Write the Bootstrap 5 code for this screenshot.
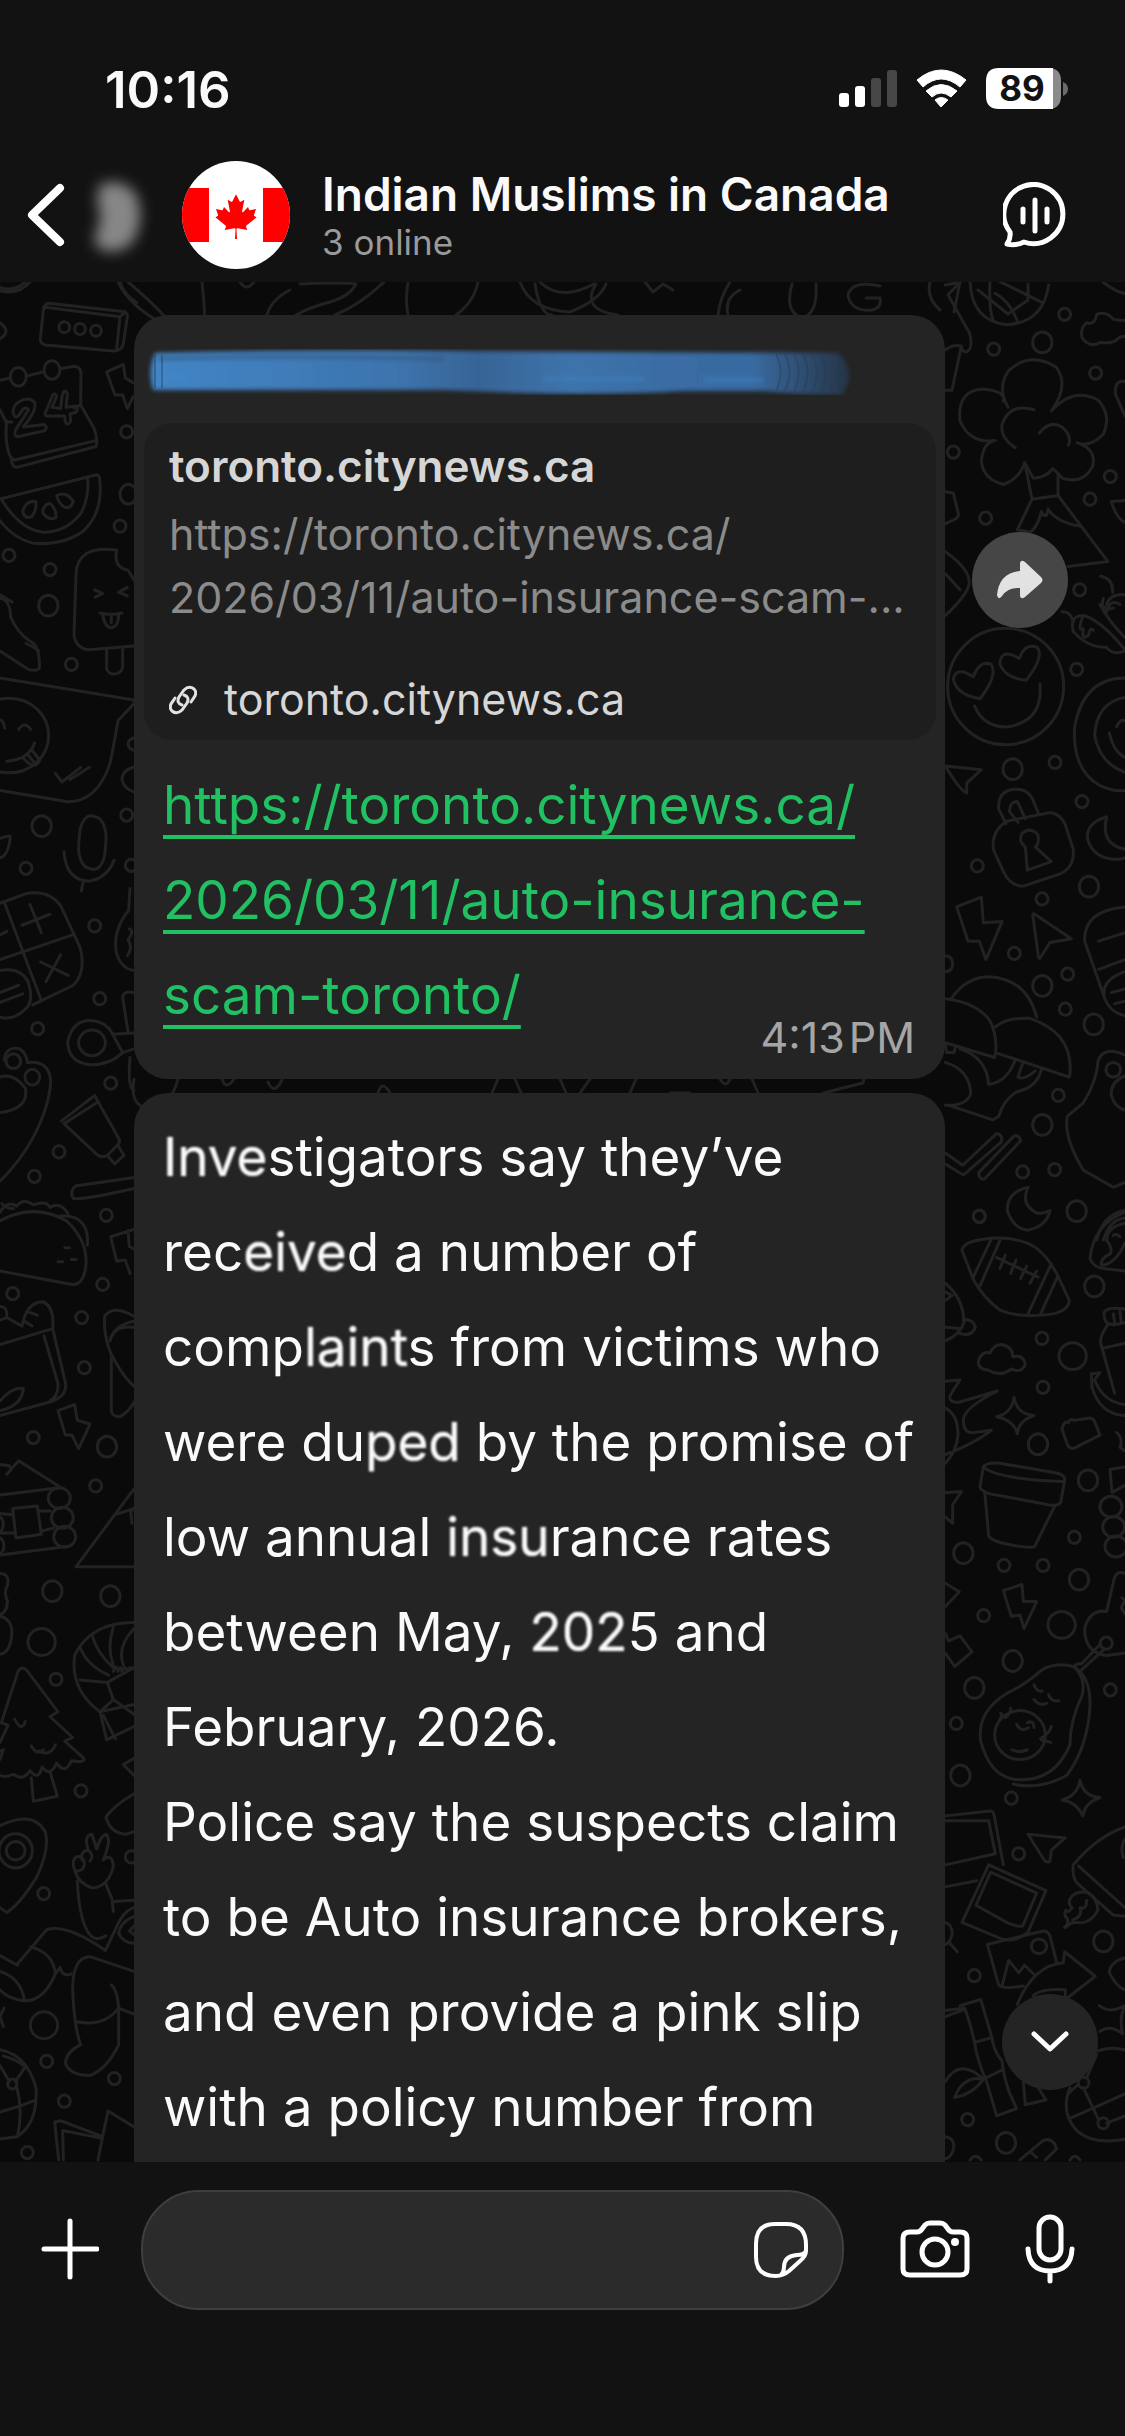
<!DOCTYPE html>
<html lang="en">
<head>
<meta charset="utf-8">
<meta name="viewport" content="width=device-width, initial-scale=1">
<title>Indian Muslims in Canada</title>
<link href="https://cdn.jsdelivr.net/npm/bootstrap@5.3.0/dist/css/bootstrap.min.css" rel="stylesheet">
<style>
body{background:#121212;color:#fafafa;font-family:Inter,"Liberation Sans",sans-serif;font-size:53px;line-height:95px}
.app-screen{height:100vh}
svg{display:block;flex:none}
.plain-btn{background:none;border:0;padding:0;color:#fff}
.status-strip{height:144px;padding:34px 56px 0 105px;line-height:1}
.clock{font-size:51px;font-weight:600}
.chat-head{height:138px;padding:4px 58px 0 27px}
.chat-name{font-size:46px;line-height:54px;font-weight:600;margin:0}
.chat-state{font-size:35px;line-height:42px;color:#9a9a9a}
.who{margin-left:32px}
.chat-area{background:#0a0a0a;padding-top:33px;min-height:0}
.wallpaper{position:absolute;top:0;left:0;width:100%;height:100%;z-index:0}
.wallpaper *{vector-effect:non-scaling-stroke}
.msg-row{position:relative;z-index:1;padding-left:134px}
.msg-row + .msg-row{margin-top:14px}
.bubble{width:811px;background:#242424;border-radius:34px;flex:none}
.first-msg{padding:34px 9px 0 10px;height:764px}
.second-msg{padding:17px 20px 0 29px;border-radius:34px 34px 0 0}
.preview{background:#1e1e1e;border-radius:28px;padding:12px 20px 8px 25px;margin-top:28px;height:317px;color:#d6d6d6;font-size:43px;line-height:63px;text-decoration:none}
.preview:hover{color:#d6d6d6}
.preview-title{font-size:44px;font-weight:600}
.preview-url{color:#8b8b8b;margin-top:5px}
.preview-site{margin-top:39px;gap:27px}
.long-link{color:#21c063;text-decoration-line:underline;text-decoration-thickness:4px;text-underline-offset:11px;text-decoration-skip-ink:none}
.long-link:hover{color:#21c063}
.link-line{margin:18px 0 0 19px}
.sent-at{font-size:43px;line-height:48px;color:#a5a5a5;margin:-30px 21px 0 0}
.smear{filter:blur(1px);text-shadow:0 0 1px #fafafa}
.round-btn{width:96px;height:96px;border:0;padding:0;border-radius:50%;color:#e2e2e2;background:#464646}
.share-btn{margin:217px 0 0 27px}
.down-btn{position:absolute;right:27px;bottom:72px;z-index:2;background:#242424;color:#fff}
.composer{height:274px;padding:28px 50px 0 41px}
.entry{height:120px;min-width:0;border-radius:58px;border:2px solid #3f3f3f;background:#2b2b2b;padding:0 33px 0 40px;margin:0 56px 0 42px}
.entry input{background:none;border:0;outline:0;color:#fff;width:100%;min-width:0;font-size:48px;line-height:60px}
.tools{gap:55px}
</style>
</head>
<body>
<div class="app-screen d-flex flex-column overflow-hidden">
<header>
  <div class="status-strip d-flex align-items-center justify-content-between">
    <span class="clock">10:16</span>
    <svg width="230" height="42" viewBox="840 68 230 42" fill="#fff" role="img" aria-label="Signal, Wi-Fi, battery">
      <rect x="840" y="93" width="10" height="14" rx="3"/><rect x="856" y="86" width="10" height="21" rx="3"/>
      <g fill="#474747"><rect x="872" y="78" width="10" height="29" rx="3"/><rect x="888" y="70" width="10" height="37" rx="3"/></g>
      <path d="M918 80Q942 60 967 80L961 87Q942 71 924 87ZM927 91Q942 78 958 91L952 97Q942 89 933 97ZM936 100Q942 95 949 100L942 107Z" stroke="#fff" stroke-width="1" stroke-linejoin="round"/>
      <path d="M999 68h50q13 0 13 13v15q0 13-13 13z" fill="#8b8b8b"/>
      <path d="M1000 68h54v41h-54q-13 0-13-13v-15q0-13 13-13z"/>
      <path d="M1064 82q5 2 5 7t-5 7z" fill="#6a6a6a"/>
      <text x="1023" y="101" text-anchor="middle" font-size="35" font-weight="700" fill="#121212">89</text>
    </svg>
  </div>
  <div class="chat-head d-flex align-items-center">
    <button class="plain-btn" type="button" aria-label="Back"><svg width="38" height="64" fill="none" stroke="#fff" stroke-width="8" stroke-linecap="round" stroke-linejoin="round"><path d="M33 5L5 32 33 59"/></svg></button>
    <svg width="117" height="108" aria-hidden="true"><defs><filter id="haze" x="-50%" y="-50%" width="200%" height="200%"><feGaussianBlur stdDeviation="7"/></filter></defs><path d="M34 25Q54 15 70 32 79 50 72 72 64 93 40 90 24 84 33 68 38 52 32 42Z" fill="#868686" filter="url(#haze)"/></svg>
    <svg width="108" height="108" viewBox="0 0 108 108" role="img" aria-label="Canadian flag"><clipPath id="disc"><circle cx="54" cy="54" r="54"/></clipPath><g clip-path="url(#disc)"><path fill="#fff" d="M0 0h108v108H0z"/><path fill="#f00" d="M0 27h27v54H0zM81 27h27v54H81z"/><path fill="#f00" transform="translate(54 55.500) scale(.0111)" d="m-90 2030 45-863a95 95 0 0 0-111-98l-859 151 116-320a65 65 0 0 0-20-73l-941-762 212-99a65 65 0 0 0 34-79l-186-572 542 115a65 65 0 0 0 73-38l105-247 423 454a65 65 0 0 0 111-57l-204-1052 327 189a65 65 0 0 0 91-27l332-652 332 652a65 65 0 0 0 91 27l327-189-204 1052a65 65 0 0 0 111 57l423-454 105 247a65 65 0 0 0 73 38l542-115-186 572a65 65 0 0 0 34 79l212 99-941 762a65 65 0 0 0-20 73l116 320-859-151a95 95 0 0 0-111 98l45 863z"/></g></svg>
    <div class="who flex-grow-1"><h1 class="chat-name">Indian Muslims in Canada</h1><div class="chat-state">3 online</div></div>
    <button class="plain-btn" type="button" aria-label="Voice chat"><svg width="64" height="66" fill="none" stroke="#fff" stroke-width="5" stroke-linecap="round" stroke-linejoin="round"><path d="M7 50A29.500 29.500 0 1 1 21 60Q13 64 4 62 8 56 7 50Z"/><path d="M20 27v13M32 18v31M44 27v13"/></svg></button>
  </div>
</header>

<main class="chat-area position-relative flex-grow-1 overflow-hidden d-flex flex-column">
<svg class="wallpaper" viewBox="0 282 1125 1880" preserveAspectRatio="xMidYMin slice" fill="none" stroke="#222" stroke-width="3" stroke-linecap="round" stroke-linejoin="round" aria-hidden="true">
<defs><ellipse id="s" rx="18" ry="10"/><ellipse id="m" rx="29" ry="17"/><ellipse id="l" rx="41" ry="22"/></defs>
<g transform="translate(0 280) scale(.3333 .6122)">
<path d="M0 18Q60 25 95 0M0 12Q40 20 75 4M0 70q30 12 10 22l-10 4M360 3q10 20 50 34"/>
<path d="M145 38L375 52Q383 55 382 60L370 104Q365 116 340 116L135 106Q120 104 121 95L130 50Q134 40 145 38ZM130 44L360 60 372 54M360 60L350 112"/>
<ellipse cx="193" cy="77" rx="16" ry="9"/><ellipse cx="240" cy="80" rx="16" ry="9"/><ellipse cx="288" cy="83" rx="16" ry="9"/>
<path d="M0 164L30 160M78 157L132 150M180 145L222 141Q242 142 243 152L242 204 282 242Q295 262 288 272L50 306Q36 306 33 290M20 230Q14 260 25 280 30 292 44 294L290 262M0 212L18 232 36 232M222 209L242 204"/>
<ellipse cx="55" cy="158" rx="24" ry="15"/><ellipse cx="156" cy="147" rx="24" ry="15"/>
<path d="M40 218Q36 205 60 198 88 190 104 200 112 212 70 240L132 236Q144 240 135 246L52 256Q38 254 50 242L86 212Q72 204 58 220 46 228 40 218ZM192 182Q200 180 202 186L198 208 228 206Q236 210 228 216L210 219 212 230Q204 240 196 232L194 222 140 222Q130 220 140 212L158 188Q166 184 170 190L156 208 182 210 186 190Z"/>
<path d="M0 358L290 318Q298 318 299 326 310 380 250 410 190 434 100 430 40 422 0 393M4 358Q60 408 130 412 200 412 244 380 270 350 262 322"/>
<path d="M108 362Q80 358 68 378 74 392 96 386 110 376 108 362ZM150 365Q130 366 128 380 145 394 168 388 170 374 150 365ZM170 352Q200 344 220 362 210 376 190 370 174 362 170 352Z"/>
<use href="#s" x="380" y="248"/><ellipse cx="385" cy="350" rx="25" ry="16"/><use href="#s" x="360" y="402"/><use href="#s" x="27" y="450"/><use href="#s" x="150" y="473"/><use href="#m" x="145" y="532"/><use href="#s" x="214" y="628"/>
<path d="M320 150L370 138 376 160 400 168M320 150L345 188 368 188 382 210 400 190"/>
<path d="M350 441Q230 432 228 482L222 580Q228 602 266 604L402 598M350 441Q340 470 384 474L402 490M320 604L320 636Q330 646 350 643 368 640 368 630V602M284 506L308 512 286 518M382 502L356 510 382 516M300 544Q330 548 366 544M308 546Q314 568 334 568 356 566 356 546M334 550v10"/>
<path d="M0 514L36 526M0 520Q30 522 32 550 50 575 90 590 120 596 118 634 110 640 84 636L0 606M78 594Q100 598 116 606"/>
<path d="M0 650L402 686 402 692 354 720Q345 750 330 790 290 854 200 852L0 834"/>
<ellipse cx="28" cy="744" rx="118" ry="61"/><path d="M0 718Q12 720 14 732M56 734Q74 720 92 734M20 786Q86 784 104 756M72 782Q104 802 120 784M84 776L106 790M96 768L116 782M166 806L186 820 242 796M210 816L268 796"/>
<path d="M402 748Q384 750 384 758 386 766 402 768M402 796Q368 800 366 816 372 832 402 836"/><use href="#m" x="125" y="892"/><use href="#s" x="380" y="874"/><use href="#s" x="78" y="961"/><use href="#s" x="394" y="956"/><use href="#s" x="284" y="1055"/>
<rect x="237" y="876" width="80" height="86" rx="34" transform="rotate(8 277 919)"/><path d="M192 934Q198 980 266 982 320 978 342 948M250 982L244 998M0 912Q30 906 31 910 25 940 0 944"/>
<path d="M0 1018L80 1002Q150 996 184 1024L240 1090Q260 1130 220 1152L98 1184M14 1018L122 1174M0 1110L216 1070M0 1070L20 1064M66 1054L150 1036M90 1020L124 1066M122 1114L204 1136M182 1102L138 1146M0 1128Q60 1122 84 1146 104 1180 74 1192 40 1210 0 1204M0 1164L56 1152M0 1180L68 1166"/>
<path d="M390 994L386 1030Q340 1060 348 1096 360 1124 402 1128M388 1060Q404 1064 384 1078 400 1090 382 1104"/>
<use href="#s" x="299" y="1174"/><use href="#s" x="113" y="1223"/><use href="#s" x="332" y="1312"/>
<path d="M368 1262Q330 1282 270 1282 204 1278 203 1244 220 1206 280 1210 320 1212 338 1232ZM338 1232L402 1230M368 1262L402 1256M402 1164Q370 1160 368 1172L384 1228M390 1270Q382 1320 402 1324"/><ellipse cx="276" cy="1246" rx="40" ry="21"/>
<path d="M12 1274Q20 1250 60 1256 80 1264 82 1278 150 1274 152 1310 148 1350 100 1400 60 1440 0 1472M0 1302Q40 1294 76 1320 88 1354 0 1360"/><ellipse cx="40" cy="1276" rx="22" ry="12"/><ellipse cx="97" cy="1302" rx="22" ry="13"/>
<path d="M184 1374L284 1332 292 1340 356 1402Q362 1408 354 1412L322 1430Q300 1436 282 1424L192 1378 296 1342M354 1414L372 1430 344 1444 322 1430"/>
<use href="#s" x="177" y="1424"/><use href="#s" x="103" y="1464"/><path d="M402 1466L226 1480Q208 1490 220 1500 240 1504 402 1484"/>
</g>
<g transform="translate(0 1200) scale(.3333 .6122)">
<path d="M0 34Q100 4 200 34 270 70 256 114 246 140 216 138L0 116M0 20Q20 0 50 10 70 -4 100 8 140 0 150 12 180 2 204 22M180 26Q270 24 262 74M6 6Q20 14 40 14M194 78h14M174 101h14M214 97h14"/>
<use href="#s" x="319" y="25"/><use href="#s" x="308" y="138"/><use href="#s" x="38" y="153"/><use href="#s" x="245" y="192"/><use href="#s" x="253" y="274"/><use href="#s" x="100" y="388"/><use href="#m" x="321" y="403"/><use href="#s" x="287" y="467"/>
<path d="M402 48L332 60 350 100 376 98 390 120M384 50L388 76 402 80M0 174Q24 174 20 192L0 196M20 192L66 206Q80 166 130 166 164 176 158 210L0 236M80 182L112 188M74 198L96 206M158 210L196 298Q204 320 150 330L0 352M132 222L174 300Q176 320 150 328M0 328Q40 304 70 308 66 336 0 344"/>
<path d="M174 344L224 334 232 360 270 366 236 406 216 384 196 384ZM402 190Q340 170 314 190 310 220 332 250 370 290 402 304M402 208Q340 204 330 230Q342 204 402 198M334 254V344Q336 354 360 354 390 344 402 330"/>
<path d="M0 432L28 434 34 440 20 448M20 448L56 426 178 468M0 482L176 470M0 580L200 566M0 512L36 514M118 508L150 508M0 544L40 544M128 540L160 536M38 504L112 500 124 546 48 552Z"/><ellipse cx="178" cy="487" rx="33" ry="17"/><ellipse cx="187" cy="519" rx="33" ry="17"/><ellipse cx="194" cy="550" rx="33" ry="17"/><ellipse cx="-8" cy="530" rx="18" ry="14"/><ellipse cx="-6" cy="565" rx="18" ry="14"/>
<path d="M402 472L228 599H402M346 514L402 504M402 504L392 510 396 528"/>
<use href="#m" x="157" y="639"/><use href="#m" x="331" y="647"/><use href="#l" x="125" y="722"/><use href="#s" x="168" y="783"/>
<path d="M0 610Q30 610 22 630 10 640 22 654 24 670 4 676M0 680Q34 684 36 706 32 740 0 742M402 690Q270 690 224 744 210 800 300 836L402 824M240 730Q260 760 326 776M276 710Q290 740 340 764M340 698Q320 730 340 760M402 700Q350 730 370 760M240 784L322 788M322 788L402 764M322 788L340 816 300 836 320 882 402 860M340 770q10-14 14 0 8-12 12 0 10-12 16 0 8-10 14-4M340 816L402 840M310 842L346 880"/>
<path d="M54 770Q66 760 80 768L174 836 150 844 218 878 194 884 252 912Q256 920 214 916 196 940 170 920 150 944 126 926 116 950 90 932 70 950 40 938 20 944 0 940M54 770L4 854 24 858 0 886M0 900L10 898 0 914M44 848Q64 870 76 852M94 892Q110 908 130 898M116 900Q150 910 166 890M94 944L100 982 172 974 150 934"/>
<use href="#s" x="243" y="965"/><path d="M402 912L370 922 402 940M402 970Q340 990 318 1008 330 1034 378 1036L402 1032"/><use href="#s" x="394" y="1073"/>
<path d="M0 1022Q100 996 136 1032 150 1060 110 1106 60 1150 20 1164L0 1156"/><ellipse cx="47" cy="1063" rx="50" ry="28"/><ellipse cx="47" cy="1063" rx="28" ry="15"/><use href="#s" x="131" y="1133"/>
<path d="M220 1080Q230 1066 252 1078 258 1094 234 1096 218 1096 220 1080ZM246 1078Q240 1064 264 1062 284 1070 270 1080M264 1060Q250 1038 276 1036L290 1060Q300 1040 318 1036 336 1044 310 1078 336 1066 340 1088 328 1120 280 1124 236 1118 224 1094M232 1112Q238 1180 270 1200 290 1212 318 1202M318 1118L336 1142 340 1162"/>
<path d="M52 1248L140 1192Q200 1182 316 1226L344 1194Q370 1160 402 1156M0 1234L52 1250M92 1220Q160 1230 166 1264L180 1254Q190 1270 214 1264M166 1264Q130 1310 70 1308 20 1304 0 1290M0 1260Q60 1270 72 1304M402 1170Q360 1180 356 1198 372 1214 402 1214M402 1186L388 1194 402 1200M340 1146L402 1144"/>
<path d="M402 1260L270 1236Q218 1236 218 1290 222 1350 242 1380 200 1390 196 1410 210 1430 270 1430 320 1420 356 1380V1320Q352 1290 334 1282M228 1342Q310 1352 356 1320L402 1330"/><use href="#l" x="132" y="1348"/><use href="#s" x="140" y="1407"/><use href="#s" x="343" y="1435"/><use href="#s" x="193" y="1472"/><use href="#s" x="82" y="1556"/>
<path d="M12 1320L0 1334 10 1350M0 1388Q80 1396 108 1450 114 1510 50 1530L0 1534M0 1414L28 1440M46 1440L76 1416M10 1398Q50 1404 76 1416M50 1448Q70 1490 52 1530M0 1490L60 1480 108 1470"/><ellipse cx="37" cy="1444" rx="14" ry="8"/><path d="M176 1568L164 1506 182 1504 308 1530 294 1568M190 1568L188 1520 300 1532M308 1530L324 1488 402 1514M330 1490L360 1500"/>
</g>
<g transform="translate(940 280) scale(.3333 .6122)">
<path d="M16 8L60 4 24 24 88 86Q100 108 84 116 66 120 64 108L36 180H16M64 108Q40 104 16 114M90 0Q92 66 200 73 310 70 326 8M150 0Q146 50 160 66M165 22Q210 34 234 70M170 0L304 36"/>
<use href="#s" x="161" y="113"/><use href="#m" x="307" y="102"/><use href="#s" x="374" y="56"/><use href="#s" x="467" y="152"/><use href="#s" x="40" y="281"/><use href="#s" x="137" y="389"/><use href="#s" x="511" y="321"/><use href="#s" x="450" y="358"/><use href="#s" x="419" y="506"/><use href="#s" x="410" y="636"/>
<path d="M555 66Q530 66 520 64 500 50 470 56 466 74 440 70 420 78 426 94 450 112 480 102 516 104 530 98 540 92 555 92M490 4Q530 20 555 22M555 166Q524 162 526 186L555 222M555 360L514 362Q530 390 555 396"/>
<path d="M204 208Q170 176 206 148 270 116 348 142 390 172 334 214Q400 174 474 196 516 220 490 252 450 274 412 266 470 276 458 304 430 334 368 324L354 316 338 308Q320 322 280 324L254 298Q240 324 190 334 130 326 124 296 130 264 166 262 90 268 60 230 50 180 130 178 200 182 190 198M226 274Q180 258 186 236 210 200 282 212M298 250Q330 228 366 240 396 254 386 270M254 298L276 358 354 352V316M276 358L232 408 272 412Q296 400 304 378 320 394 324 374 350 396 420 402M354 352L504 460 384 468"/>
<path d="M16 346L40 348 56 384 48 390 16 398M16 444Q90 472 88 496 80 516 16 548M16 480L60 506"/>
<ellipse cx="197" cy="664" rx="174" ry="95"/><path d="M120 684Q50 678 40 652 48 630 100 648 120 620 154 628 174 646 120 684ZM258 654Q196 650 180 628 180 600 238 618 256 592 292 600 314 616 258 654ZM104 696Q130 730 200 730 310 722 300 660"/>
<path d="M555 606Q520 614 500 600 440 600 400 574 388 548 430 548 480 554 555 604M400 558Q390 540 366 542M430 548Q410 574 430 570 424 590 446 580 450 566 460 572M555 584Q510 560 480 530 500 540 520 536M490 520Q480 540 500 542 510 520 540 530M482 484Q520 488 518 510M500 530Q510 512 555 514M555 650Q430 650 404 730 396 800 480 826 520 836 555 834M555 682Q470 690 464 744 480 790 555 804M508 740Q520 770 555 780M530 730Q540 716 555 720"/>
<path d="M16 794L124 800 80 822 80 838Q60 834 16 794"/><use href="#m" x="218" y="799"/><use href="#s" x="345" y="788"/><use href="#s" x="426" y="852"/>
<path d="M200 884L330 870Q362 872 376 890L400 930Q404 960 360 970L250 990Q210 990 190 966L160 930Q154 900 200 884ZM198 888L176 864Q172 836 220 832 260 830 276 846L296 872M234 886L208 868Q210 852 232 852L256 880"/><path d="M256 926Q234 918 246 904 270 892 294 906 298 922 286 926L334 950 262 964Z"/>
<use href="#s" x="112" y="957"/><use href="#m" x="447" y="991"/><use href="#s" x="306" y="1011"/><use href="#s" x="223" y="1100"/><use href="#m" x="307" y="1153"/><use href="#s" x="383" y="1134"/><use href="#s" x="376" y="1191"/><use href="#m" x="461" y="1216"/><use href="#s" x="355" y="1332"/><use href="#m" x="307" y="1380"/><use href="#s" x="248" y="1457"/><use href="#s" x="344" y="1453"/><use href="#m" x="410" y="1521"/><use href="#s" x="118" y="1529"/>
<path d="M500 877Q440 886 442 912 460 948 540 946L555 944M500 877Q480 922 555 930M50 1024L124 1008 130 1050 186 1048 138 1110 118 1080 84 1080ZM278 1036Q282 1034 290 1038L394 1076 330 1082 300 1108Q294 1108 294 1100ZM555 1024Q430 1030 434 1080L496 1176M476 1080L555 1066M476 1126L555 1110M555 1130Q480 1144 494 1174 510 1196 555 1202M514 1164L555 1158M524 1182L555 1178M16 1104Q38 1104 38 1118 36 1130 16 1130"/>
<path d="M36 1172Q80 1138 150 1138 260 1142 290 1204M16 1174Q110 1180 150 1210 176 1240 164 1270L16 1246M166 1220Q200 1204 270 1206 400 1230 390 1296L388 1302 166 1262M16 1278Q90 1290 92 1330 76 1350 16 1348M16 1248L20 1262H42L46 1254M60 1256Q140 1270 146 1314 200 1310 224 1276M234 1302Q246 1280 252 1278M234 1302Q250 1308 286 1292M304 1290Q290 1320 230 1326 190 1340 176 1366L158 1372 26 1348"/>
<path d="M16 1444L70 1462 184 1408Q190 1396 170 1394L68 1446 16 1426M116 1458L222 1398Q238 1396 242 1406L134 1468Q116 1470 116 1458ZM264 1482Q200 1490 202 1520 220 1550 264 1552 320 1546 330 1520 310 1526 290 1524 240 1510 264 1482ZM555 1266Q490 1250 474 1276 470 1310 430 1344L382 1366Q370 1400 430 1454L520 1482 555 1474M555 1300Q510 1310 514 1332 524 1352 555 1356M470 1568Q490 1526 555 1520M490 1568Q510 1534 555 1532"/><ellipse cx="520" cy="1290" rx="22" ry="12"/>
</g>
<g transform="translate(940 1200) scale(.3333 .6122)">
<use href="#s" x="118" y="27"/><use href="#m" x="463" y="141"/><use href="#s" x="306" y="226"/><use href="#l" x="398" y="255"/><use href="#s" x="309" y="306"/><use href="#m" x="294" y="399"/><use href="#m" x="444" y="458"/><use href="#s" x="403" y="551"/><use href="#m" x="70" y="577"/><use href="#s" x="192" y="597"/><use href="#s" x="309" y="597"/><use href="#m" x="417" y="620"/><use href="#s" x="131" y="679"/><use href="#l" x="365" y="694"/><use href="#m" x="218" y="753"/><use href="#m" x="103" y="797"/><use href="#s" x="49" y="855"/><use href="#s" x="511" y="800"/><use href="#m" x="61" y="940"/><use href="#s" x="214" y="977"/><use href="#s" x="236" y="1068"/><use href="#m" x="490" y="1211"/><use href="#s" x="103" y="1267"/><use href="#s" x="83" y="1502"/><use href="#m" x="198" y="1540"/>
<path d="M66 82Q70 68 130 64 200 58 260 70 310 80 350 120L388 164Q386 180 340 186 240 194 180 180 130 160 100 130ZM98 128L152 66M120 140L180 66M264 186L334 104M302 186L354 124M170 94L294 126M196 90L180 112M228 98L212 120M260 108L242 128M290 116L270 136"/>
<path d="M16 136Q70 160 72 200 60 220 16 230M16 150L36 156 16 164M70 196Q100 194 106 208 96 224 60 218M16 208L60 210M555 20Q460 40 450 96 460 110 490 112L555 116M555 38Q500 44 500 66 520 80 510 88 480 96 484 106 510 108 540 86 550 76 555 70M520 58Q530 54 540 60"/>
<path d="M146 278Q110 276 116 262 126 246 150 250 160 236 186 236 220 240 218 256 250 252 256 268 246 284 214 276 180 290 146 278ZM16 296L60 294Q40 310 30 320 26 332 60 330L172 312Q70 340 70 360 70 380 100 380L154 376Q110 396 16 416M16 340Q54 350 54 384 50 410 16 430M222 322Q230 350 282 352 236 360 232 382 222 360 170 354 216 348 222 322ZM366 374Q372 360 384 364 390 356 402 360L450 356Q460 356 464 362L480 384 400 406Q384 406 380 396Z"/>
<path d="M130 436Q140 428 180 430L350 446Q378 450 374 458L362 494Q350 502 310 496L150 480Q118 474 120 468ZM134 438Q180 456 372 460M134 476L146 548Q150 556 200 562 270 570 284 566L344 500M16 478L64 476 38 498 38 528 16 518"/>
<path d="M555 178Q500 174 492 184 492 200 506 202Q480 220 482 234L524 316M490 242L555 234M506 202Q520 206 555 200M520 186L524 200M540 182L544 200M454 284L480 282 464 294Q490 330 555 334M454 284L456 306Q480 350 555 352M530 380Q550 390 540 404L555 410M555 436L510 440 516 478 555 466"/><ellipse cx="513" cy="501" rx="33" ry="17"/><ellipse cx="521" cy="534" rx="33" ry="17"/><ellipse cx="528" cy="566" rx="33" ry="17"/>
<path d="M16 626L58 640 16 664M16 708L26 720 60 712 96 738 44 762 16 740M190 638L246 628 250 656 290 656 252 700 240 678 214 680ZM555 610Q530 604 522 620L500 672Q450 668 434 700 434 740 500 744L555 740M546 650L555 654 544 666 555 676"/>
<path d="M300 770Q340 754 400 762 460 780 448 840 436 900 380 940 300 964 220 954M300 770Q260 790 200 806 110 836 122 884 150 940 220 946 340 954 390 890 390 850 426 810 440 780 400 762M404 762Q410 756 424 758L480 726M424 768L492 734"/><ellipse cx="240" cy="874" rx="76" ry="40"/><ellipse cx="499" cy="724" rx="18" ry="10"/><path d="M178 850Q190 840 182 838M196 846Q214 838 212 830M230 856Q240 870 266 862M262 854Q280 848 282 862M216 898Q236 904 262 898M302 880Q330 870 334 860M304 882L332 886M282 792Q290 804 306 802M282 816Q300 828 320 822M326 808Q334 820 356 818"/>
<path d="M420 948Q430 974 480 976 436 984 428 1006 412 984 366 980 412 974 420 948ZM264 1036L376 1042Q350 1054 334 1062L330 1080Q320 1084 310 1076ZM555 1024Q470 1040 400 1086 394 1110 420 1120L520 1168 555 1170M416 1088L555 1156M555 1044Q540 1056 550 1074"/>
<path d="M16 1006L150 998Q160 998 162 1004L190 1086M16 1014L146 1014 166 1068 16 1086M16 1122L110 1112M146 1086L318 1128 264 1196Q230 1212 190 1208L66 1180ZM152 1098L290 1132 248 1186Q230 1188 200 1180L108 1152ZM142 1216L310 1194Q324 1194 330 1202L350 1246M142 1216L176 1282Q184 1290 250 1284M186 1284L206 1242 236 1262 254 1250 284 1266"/><ellipse cx="297" cy="1219" rx="23" ry="12"/>
<path d="M232 1314Q280 1250 370 1246L374 1228 466 1268 376 1306V1290Q300 1288 280 1300M374 1188Q390 1180 380 1172 370 1170 378 1160 384 1166 396 1156 384 1150 390 1142 400 1130 436 1130 470 1136 474 1160 450 1184 410 1180 390 1180 378 1188M398 1176Q430 1170 420 1156 440 1160 440 1144M16 1180Q38 1184 36 1200 30 1214 16 1216M26 1212L52 1228M555 1238Q510 1244 508 1262 530 1286 555 1290"/>
<path d="M16 1324L74 1320 90 1346 104 1376Q110 1404 140 1440L170 1496 230 1484 208 1458Q190 1430 186 1406 160 1390 156 1368L122 1306 60 1316M74 1322L16 1334M104 1376L156 1368M130 1436L190 1420M130 1436Q70 1430 44 1466 100 1460 130 1436ZM130 1436Q60 1400 16 1440M250 1440L256 1478 318 1470 290 1446M478 1316Q510 1330 555 1316 536 1336 548 1362 510 1346 480 1358M390 1450Q360 1490 410 1520 460 1544 555 1534M474 1390Q510 1382 555 1388M470 1396L440 1434M430 1450L474 1500M390 1500L555 1460M500 1508L555 1496M384 1460L416 1444"/><ellipse cx="431" cy="1442" rx="16" ry="9"/><ellipse cx="490" cy="1508" rx="16" ry="9"/><path d="M240 1568L310 1536Q330 1532 344 1542L350 1550 316 1568M270 1554L290 1564M16 1530Q42 1532 42 1546 36 1564 16 1566M90 1568q16-12 34 0M390 1568q14-12 30 0"/>
</g>
<path d="M118 282Q130 306 160 322M128 282Q150 300 170 322M202 282Q204 300 205 320M240 282q6 10 14 0M300 284Q340 282 356 284 350 296 330 302 300 310 290 320M290 290Q270 300 266 318M384 282Q360 305 335 315M408 282Q405 300 408 315M478 282Q474 302 456 315M520 282Q530 310 570 312 600 300 606 284M535 284Q540 315 552 315M540 282Q560 302 594 284M596 284Q580 310 618 315M645 282l8 10 10-8 10 6M730 282q-10 15-12 33M740 290q-16 8-12 25M792 284q-8 28 10 34 16-4 14-34M880 286q-30-6-32 10 4 16 24 14 10-2 8-12h-14M930 282q-4 16 10 28M960 282l-6 30M978 290l30 24 20-14V284"/>
<path d="M134 1079q-4 24 10 28 26 4 34-28M222 1079q4 12 12 0M268 1082q6 14 14-2M378 1093q4-14 12 0M498 1079l-6 14M515 1079l6 14M560 1079l6 14M580 1093l10-14M636 1079l-6 14M670 1093l20 0M720 1079q6 10 10 0M752 1079l6 14M864 1079l-1 4-40 10"/>
</svg>

<div class="msg-row d-flex align-items-start">
  <article class="bubble first-msg">
    <svg class="mw-100" width="740" height="46" viewBox="0 0 740 46" role="img" aria-label="Sender hidden"><defs><linearGradient id="ink"><stop offset="0" stop-color="#4285c6"/><stop offset=".35" stop-color="#3d74ae"/><stop offset=".47" stop-color="#386496"/><stop offset=".6" stop-color="#3d73ab"/><stop offset=".75" stop-color="#3a6ca3"/><stop offset=".86" stop-color="#396ba2"/><stop offset="1" stop-color="#263444"/></linearGradient><filter id="soft"><feGaussianBlur stdDeviation="2"/></filter></defs>
      <g filter="url(#soft)"><path d="M11 4Q160 0 330 2L694 4Q714 24 698 46 650 45 620 42 580 42 540 42 470 46 380 44L300 41 9 41Q3 22 11 4Z" fill="url(#ink)"/><path d="M14 10Q140 6 300 10" stroke="#34587f" stroke-width="3" fill="none"/><path d="M14 29H44M400 30H500M560 31H620" stroke="#438dce" stroke-width="4" opacity=".4"/></g>
      <path d="M632 5q9 18 0 37M641 5q9 18 0 37M650 5q9 18 0 38M659 5q9 18 0 38M668 5q9 18 0 39M677 5q9 18 0 39M686 5q9 18 0 40M695 6q9 18 0 38M11 6v33M18 6v33" stroke="#253d58" stroke-width="2" opacity=".4" fill="none"/></svg>
    <a class="preview d-block" href="https://toronto.citynews.ca/2026/03/11/auto-insurance-scam-toronto/">
      <div class="preview-title">toronto.citynews.ca</div>
      <div class="preview-url">https://toronto.citynews.ca/<br>2026/03/11/auto-insurance-scam-...</div>
      <div class="preview-site d-flex align-items-center"><svg width="28" height="30" viewBox="0 0 28 30" fill="none" stroke="#e2e2e2" stroke-width="3" stroke-linecap="round"><path d="M13 20Q7 18 10 12L15 5Q20 0 25 4 29 8 24 14L22 17"/><path d="M15 10Q21 12 18 18L13 25Q8 30 3 26-1 22 4 16L6 13"/></svg><span>toronto.citynews.ca</span></div>
    </a>
    <div class="link-line"><a class="long-link" href="https://toronto.citynews.ca/2026/03/11/auto-insurance-scam-toronto/">https://toronto.citynews.ca/<br>2026/03/11/auto-insurance-<br>scam-toronto/</a></div>
    <div class="sent-at text-end">4:13&#8202;PM</div>
  </article>
  <button class="round-btn share-btn d-flex align-items-center justify-content-center" type="button" aria-label="Forward"><svg width="48" height="42" viewBox="0 0 48 42" fill="currentColor"><path d="M24 4Q25 0 29 3L45 18Q48 21 45 24L29 38Q25 41 24 37V29Q12 28 6 37 2 42 1 36 3 14 24 12Z"/></svg></button>
</div>
<div class="msg-row d-flex flex-grow-1">
  <article class="bubble second-msg"><span class="smear">Inve</span>stigators say they’ve<br>rec<span class="smear">eive</span>d a number of<br>comp<span class="smear">laint</span>s from victims who<br>were du<span class="smear">ped</span> by the promise of<br>low annual <span class="smear">insu</span>rance rates<br>between May, <span class="smear">202</span>5 and<br>February, 2026.<br>Police say the suspects claim<br>to be Auto insurance brokers,<br>and even provide a pink slip<br>with a policy number from</article>
</div>
<button class="round-btn down-btn d-flex align-items-center justify-content-center" type="button" aria-label="Scroll to latest"><svg width="38" height="24" fill="none" stroke="currentColor" stroke-width="5" stroke-linecap="round" stroke-linejoin="round"><path d="M3 4L19 19 35 4"/></svg></button>
</main>

<footer class="composer d-flex align-items-start">
  <button class="plain-btn mt-4" type="button" aria-label="Attach"><svg class="mt-1" width="58" height="62" fill="none" stroke="#fff" stroke-width="5" stroke-linecap="round"><path d="M29 3V59M3 31H56"/></svg></button>
  <div class="entry d-flex align-items-center flex-grow-1">
    <input type="text" aria-label="Message">
    <button class="plain-btn" type="button" aria-label="Stickers"><svg width="56" height="58" fill="none" stroke="#fff" stroke-width="4" stroke-linecap="round" stroke-linejoin="round"><path d="M53 30V24Q53 3 33 3H22Q3 3 3 23V36Q3 55 23 55 30 55 36 50L47 40Q53 35 53 30ZM53 30Q51 34 44 34 31 35 31 46 31 51 28 54"/></svg></button>
  </div>
  <div class="tools d-flex align-items-center mt-4">
    <button class="plain-btn" type="button" aria-label="Camera"><svg width="70" height="58" fill="none" stroke="#fff" stroke-width="5" stroke-linejoin="round"><path d="M10 12H17Q20 12 22 9L25 5Q27 3 30 3H40Q43 3 45 5L48 9Q50 12 53 12H60Q67 12 67 18V49Q67 55 60 55H10Q3 55 3 49V18Q3 12 10 12Z"/><circle cx="35" cy="32" r="13"/><circle cx="55" cy="22" r="4" fill="#fff" stroke="none"/></svg></button>
    <button class="plain-btn" type="button" aria-label="Record voice"><svg width="50" height="70" viewBox="3 0 50 70" fill="none" stroke="#fff" stroke-width="5" stroke-linecap="round"><rect x="17" y="3" width="22" height="43" rx="11"/><path d="M6 35Q7 57 28 57 49 57 50 35M28 57V67"/></svg></button>
  </div>
</footer>
</div>
<script src="https://cdn.jsdelivr.net/npm/bootstrap@5.3.0/dist/js/bootstrap.bundle.min.js"></script>
</body>
</html>
